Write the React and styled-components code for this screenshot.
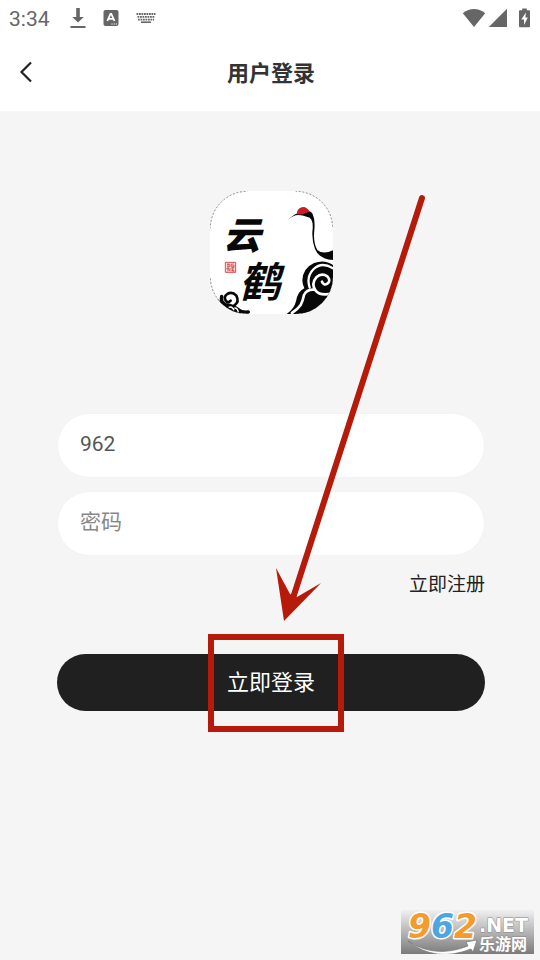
import React, { useState } from "react";
import styled, { createGlobalStyle } from "styled-components";

const GlobalStyle = createGlobalStyle`
  * { box-sizing: border-box; }
  body {
    margin: 0;
    background: #f5f5f5;
    font-family: Roboto, "Noto Sans CJK SC", sans-serif;
  }
`;

const Page = styled.div`
  min-height: 100vh;
  display: flex;
  flex-direction: column;
`;

const StatusBar = styled.div`
  display: flex;
  align-items: center;
  justify-content: space-between;
  height: 36px;
  padding: 0 10px 0 9px;
  background: #fff;
  color: #666;
`;

const StatusGroup = styled.div`
  display: flex;
  align-items: center;
  gap: ${(p) => p.$gap}px;
`;

const Clock = styled.span`
  font-size: 21px;
  line-height: 36px;
  padding-top: 2px;
  margin-right: 3px;
`;

const Header = styled.header`
  display: grid;
  grid-template-columns: 52px 1fr 52px;
  align-items: center;
  height: 75px;
  padding-bottom: 3px;
  background: #fff;
`;

const BackButton = styled.button`
  display: grid;
  place-items: center;
  height: 52px;
  padding: 0;
  border: 0;
  background: none;
  color: #222;
  cursor: pointer;
`;

const Title = styled.h1`
  margin: 0;
  padding: 4px 0 0 2px;
  text-align: center;
  font-size: 22px;
  line-height: 32px;
  font-weight: 700;
  color: #333;
`;

const Main = styled.main`
  flex: 1;
  display: flex;
  flex-direction: column;
  padding: 80px 55px 0 57px;
`;

const Logo = styled.svg`
  align-self: center;
  width: 123px;
  height: 123px;
`;

const Form = styled.form`
  display: flex;
  flex-direction: column;
  margin-top: 99px;
`;

const Field = styled.input`
  width: 100%;
  height: 65px;
  margin-bottom: 13px;
  padding: 0 22px 3px;
  border: 1px solid #f3f3f3;
  border-radius: 33px;
  outline: 0;
  background: #fff;
  font: inherit;
  font-size: 21px;
  color: #555;
  &::placeholder { color: #888; opacity: 1; }
`;

const RegisterLink = styled.a`
  align-self: flex-end;
  padding-top: 1px;
  font-size: 19px;
  line-height: 30px;
  color: #222;
  text-decoration: none;
`;

const SubmitArea = styled.div`
  position: relative;
  margin-top: 54px;
`;

const SubmitButton = styled.button`
  display: block;
  width: 100%;
  height: 57px;
  padding: 0 0 5px;
  border: 0;
  border-radius: 29px;
  background: #202020;
  color: #fff;
  font: inherit;
  font-size: 22px;
  cursor: pointer;
`;

const Highlight = styled.div`
  position: absolute;
  top: -20px;
  left: calc(50% - 63px);
  width: 136px;
  height: 98px;
  border: 6px solid #b51a0b;
  pointer-events: none;
`;

const Arrow = styled.svg`
  position: absolute;
  bottom: calc(100% + 29px);
  left: calc(50% - 1px);
  width: 160px;
  height: 435px;
  pointer-events: none;
`;

const Watermark = styled.svg`
  position: absolute;
  right: 6px;
  bottom: 6px;
  width: 133px;
  height: 44px;
`;

const Frame = styled.div`
  position: relative;
`;

function DownloadIcon() {
  return (
    <svg width="16" height="22" viewBox="0 0 16 22" fill="currentColor" aria-hidden="true">
      <path d="M6.2 1h3.6v9h4L8 15.4 2.2 10h4zM.5 19h15v2H.5z" />
    </svg>
  );
}

function InputMethodIcon() {
  return (
    <svg width="16" height="18" viewBox="0 0 16 18" aria-hidden="true">
      <rect x=".5" y="1" width="15" height="16" rx="2" fill="currentColor" />
      <path d="M4.300 12 7.500 5h.8l3.200 7M5.500 9.800h5" fill="none" stroke="#fff" strokeWidth="1.800" />
      <path d="M8.4 14.4h1.2v1.2H8.4zm2.2 0h1.2v1.2h-1.2zm2.2 0H14v1.2h-1.2z" fill="#fff" />
    </svg>
  );
}

function KeyboardIcon() {
  return (
    <svg width="20" height="12" viewBox="0 0 20 12" fill="none" stroke="currentColor" aria-hidden="true">
      <path d="M.5 2h19M1.5 4.8h17M2 7.6h16" strokeWidth="1.8" strokeDasharray="1.8 .7" />
      <path d="M5 10.2h10" strokeWidth="1.6" />
    </svg>
  );
}

function WifiIcon() {
  return (
    <svg width="24" height="20" viewBox="0 0 24 20" fill="currentColor" aria-hidden="true">
      <path d="M.8 5.2Q12-3.2 23.2 5.2L12 19z" />
    </svg>
  );
}

function SignalIcon() {
  return (
    <svg width="20" height="20" viewBox="0 0 20 20" fill="currentColor" aria-hidden="true">
      <path d="M19 .8V19H.8z" />
    </svg>
  );
}

function BatteryIcon() {
  return (
    <svg width="11" height="20" viewBox="0 0 12 21" aria-hidden="true">
      <path d="M3.5 0h5v2H11q1 0 1 1v16.5q0 1-1 1H1q-1 0-1-1V3q0-1 1-1h2.5z" fill="currentColor" />
      <path d="M7.500 4.500 2.500 12h3v6L9.600 10H7z" fill="#fff" />
    </svg>
  );
}

function CraneLogo() {
  return (
    <Logo viewBox="30 33 369 369" role="img" aria-label="云鹤">
      <defs>
        <clipPath id="tile">
          <rect x="30" y="33" width="369" height="369" rx="112" />
        </clipPath>
      </defs>
      <rect x="31" y="34" width="367" height="367" rx="111" fill="#fff" stroke="#555" strokeWidth="2" strokeDasharray="6 5" />
      <path d="M142 34H287M31 145V290M398 145V290M142 401H287" stroke="#fff" strokeWidth="4" />
      <g clipPath="url(#tile)">
        <text x="70" y="207" fontSize="112" fontWeight="900" fontStyle="italic" fontFamily="Noto Sans CJK SC, sans-serif" fill="#080808">云</text>
        <text x="118" y="350" fontSize="124" fontWeight="700" fontStyle="italic" fontFamily="Noto Sans CJK SC, sans-serif" fill="#080808">鹤</text>
        <path d="M76 247H107V277H76z" fill="#f5dede" stroke="#dc4c4c" strokeWidth="3" />
        <path d="M81 253h9v7h-8m13-9v11h7v-7M79 266h9v7m5-9v10m5-8v7h6M84 250v24m15-24v25" fill="none" stroke="#d94040" strokeWidth="2.5" />
        <path d="M263 120Q286 99 303 96Q328 86 338 102Q346 119 343 151Q339 187 352 210Q369 225 399 211V240Q358 238 345 207Q334 178 338 146Q340 113 322 111Q302 103 287 106Q275 110 263 120Z" fill="#080808" />
        <path d="M291 96Q295 81 313 81Q327 87 328 95L317 99Q307 105 291 103Z" fill="#c81e27" />
        <path d="M399 255Q374 237 342 249Q309 264 307 301Q307 314 313 325Q293 334 288 364Q282 388 260 402H399Z" fill="#080808" />
        <g fill="none" stroke="#fff" strokeLinecap="round">
          <path d="M399 265Q366 244 341 267Q318 290 329 323" strokeWidth="7" />
          <path d="M366 305Q371 318 382 311Q394 302 382 289Q365 277 349 292Q332 311 347 332Q360 349 399 340" strokeWidth="8" />
          <path d="M342 329Q321 327 312 345Q309 361 302 375Q292 389 276 399" strokeWidth="8" />
        </g>
        <g fill="none" stroke="#080808" strokeLinecap="round">
          <path d="M92 362Q84 371 77 362Q70 350 82 342Q97 334 109 347Q119 366 103 376" strokeWidth="8" />
          <path d="M65 349Q61 367 77 374Q98 376 115 389Q124 398 145 396" strokeWidth="10" />
        </g>
        <path d="M48 353Q69 371 88 377Q107 376 126 402H80L38 376Z" fill="#080808" />
        <path d="M86 382Q97 378 102 391M103 384Q113 383 115 397" fill="none" stroke="#fff" strokeWidth="4" />
      </g>
    </Logo>
  );
}

function SiteMark() {
  return (
    <Watermark viewBox="0 0 133 44" role="img" aria-label="962.NET 乐游网">
      <defs>
        <linearGradient id="plate" x1="0" y1="0" x2="0" y2="1">
          <stop offset="0" stopColor="#f0f0f0" />
          <stop offset="1" stopColor="#7b7b7b" />
        </linearGradient>
      </defs>
      <rect width="133" height="44" fill="url(#plate)" />
      <path d="M7 31Q34 49 67 36L65 32 76 30 72 42 70 39Q34 53 7 31Z" fill="#fff" stroke="#777" strokeWidth=".7" />
      <g fontWeight="700" paintOrder="stroke" strokeLinejoin="round">
        <text x="7" y="28" fontFamily="DejaVu Sans, sans-serif" fontSize="33" fontStyle="italic" stroke="#fff" strokeWidth="3">
          <tspan fill="#f59a2c">9</tspan>
          <tspan fill="#4ca7e0">6</tspan>
          <tspan fill="#f59a2c">2</tspan>
        </text>
        <text x="78" y="22" fontFamily="DejaVu Sans, sans-serif" fontSize="19" fill="#fff" stroke="#888" strokeWidth="1">.NET</text>
        <text x="78" y="40" fontFamily="Noto Sans CJK SC, sans-serif" fontSize="16" fill="#fff" stroke="#888" strokeWidth="1">乐游网</text>
      </g>
    </Watermark>
  );
}

export default function App() {
  const [account, setAccount] = useState("962");
  const [password, setPassword] = useState("");

  return (
    <Frame>
      <GlobalStyle />
      <Page>
        <StatusBar>
          <StatusGroup $gap={17}>
            <Clock>3:34</Clock>
            <DownloadIcon />
            <InputMethodIcon />
            <KeyboardIcon />
          </StatusGroup>
          <StatusGroup $gap={11}>
            <StatusGroup $gap={2}>
              <WifiIcon />
              <SignalIcon />
            </StatusGroup>
            <BatteryIcon />
          </StatusGroup>
        </StatusBar>
        <Header>
          <BackButton type="button" aria-label="返回">
            <svg width="14" height="22" viewBox="0 0 14 22" fill="none" stroke="currentColor" strokeWidth="2.2" aria-hidden="true">
              <path d="M12 1.5 2.5 11l9.500 9.500" />
            </svg>
          </BackButton>
          <Title>用户登录</Title>
        </Header>
        <Main>
          <CraneLogo />
          <Form onSubmit={(e) => e.preventDefault()}>
            <Field
              type="text"
              aria-label="账号"
              value={account}
              onChange={(e) => setAccount(e.target.value)}
            />
            <Field
              type="password"
              aria-label="密码"
              placeholder="密码"
              value={password}
              onChange={(e) => setPassword(e.target.value)}
            />
            <RegisterLink href="#register">立即注册</RegisterLink>
            <SubmitArea>
              <SubmitButton type="submit">立即登录</SubmitButton>
              <Highlight />
              <Arrow viewBox="270 190 160 435" aria-hidden="true">
                <path d="M422 198 293 598" stroke="#b51a0b" strokeWidth="6" strokeLinecap="round" />
                <path d="M276 568 290 594 297 597 321 583 284 621Z" fill="#b51a0b" />
              </Arrow>
            </SubmitArea>
          </Form>
        </Main>
      </Page>
      <SiteMark />
    </Frame>
  );
}
